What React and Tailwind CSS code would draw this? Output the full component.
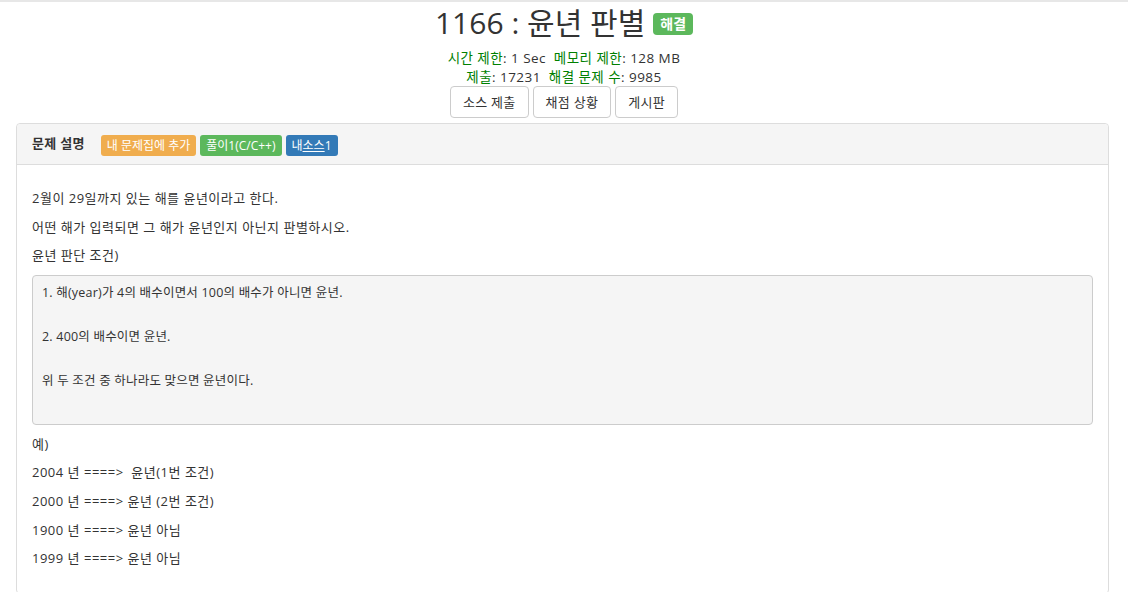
import React from "react";

const font = { fontFamily: '"Open Sans", "Noto Sans CJK KR", sans-serif' };

function Btn({ children }) {
  return (
    <button className="h-[32px] px-[12px] border border-[#cccccc] rounded-[4px] bg-white text-[13px] text-[#333333] leading-[18px] tracking-[0.3px]">
      {children}
    </button>
  );
}

function Label({ bg, children }) {
  return (
    <span className={`inline-flex items-center h-[21px] px-[6px] rounded-[3px] text-white text-[12px] leading-[21px] ${bg}`}>
      {children}
    </span>
  );
}

export default function App() {
  return (
    <div className="min-h-[592px] bg-white text-[#333333] border-t-2 border-[#e7e7e7]" style={font}>
      <div className="flex flex-col items-center">
        <h1 className="flex items-center h-[42px] text-[30px] leading-[42px] font-normal text-[#333333]">
          <span>1166 : 윤년 판별</span>
          <span className="ml-[8px] mt-[2px] inline-flex items-center justify-center h-[22px] px-[7px] rounded-[4px] bg-[#5cb85c] text-white text-[14px] font-bold leading-[22px]">
            해결
          </span>
        </h1>
        <div className="mt-[5px] text-[13.5px] leading-[19px] tracking-[0.45px] text-center">
          <div>
            <span className="text-[#008000]">시간 제한</span>: 1 Sec&nbsp;&nbsp;
            <span className="text-[#008000]">메모리 제한</span>: 128 MB
          </div>
          <div>
            <span className="text-[#008000]">제출</span>: 17231&nbsp;&nbsp;
            <span className="text-[#008000]">해결 문제 수</span>: 9985
          </div>
        </div>
        <div className="-mt-[1px] flex gap-[4px]">
          <Btn>소스 제출</Btn>
          <Btn>채점 상황</Btn>
          <Btn>게시판</Btn>
        </div>
      </div>

      <div className="mt-[5px] ml-[16px] w-[1093px] border border-[#dddddd] rounded-[4px]">
        <div className="h-[41px] bg-[#f5f5f5] border-b border-[#dddddd] rounded-t-[4px] flex items-center px-[15px]">
          <span className="text-[13px] font-semibold text-[#333333] mr-[16px] tracking-[0.3px]">문제 설명</span>
          <div className="flex gap-[4px] mt-[2px]">
            <Label bg="bg-[#f0ad4e]">내 문제집에 추가</Label>
            <Label bg="bg-[#5cb85c]">풀이1(C/C++)</Label>
            <Label bg="bg-[#337ab7]">
              내<span className="underline">소스</span>1
            </Label>
          </div>
        </div>
        <div className="px-[15px] pt-[24px] pb-[15px] text-[13px] leading-[18.6px] tracking-[0.5px]">
          <p className="mb-[10px]">2월이 29일까지 있는 해를 윤년이라고 한다.</p>
          <p className="mb-[10px]">어떤 해가 입력되면 그 해가 윤년인지 아닌지 판별하시오.</p>
          <p className="mb-[10px]">윤년 판단 조건)</p>
          <div className="mb-[10px] bg-[#f5f5f5] border border-[#cccccc] rounded-[4px] pl-[9px] pt-[6px] pb-[10px] text-[12.5px] leading-[22px] tracking-[0.2px]">
            <div>1. 해(year)가 4의 배수이면서 100의 배수가 아니면 윤년.</div>
            <div>&nbsp;</div>
            <div>2. 400의 배수이면 윤년.</div>
            <div>&nbsp;</div>
            <div>위 두 조건 중 하나라도 맞으면 윤년이다.</div>
            <div>&nbsp;</div>
          </div>
          <p className="mb-[10px]">예)</p>
          <p className="mb-[10px]">2004 년 ====&gt;&nbsp; 윤년(1번 조건)</p>
          <p className="mb-[10px]">2000 년 ====&gt; 윤년 (2번 조건)</p>
          <p className="mb-[10px]">1900 년 ====&gt; 윤년 아님</p>
          <p className="mb-[10px]">1999 년 ====&gt; 윤년 아님</p>
        </div>
      </div>
    </div>
  );
}
